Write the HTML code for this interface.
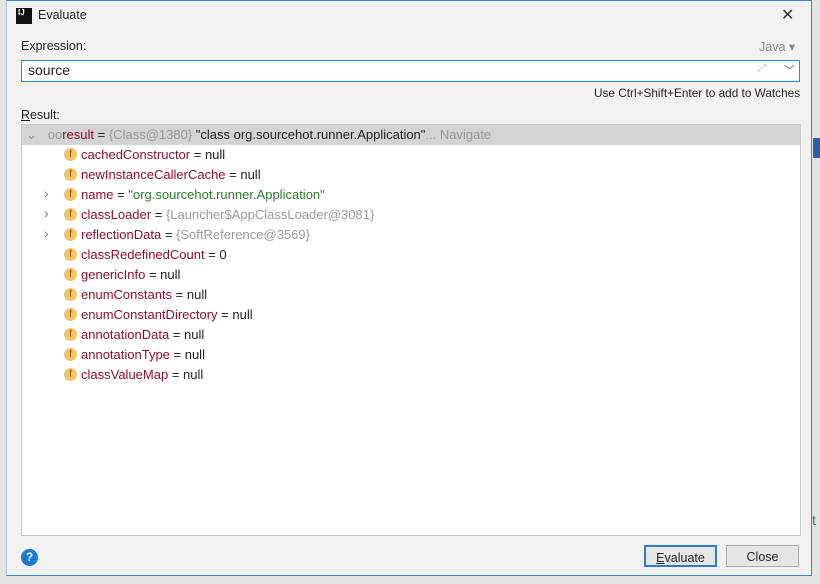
<!DOCTYPE html>
<html><head><style>
body{margin:0;width:820px;height:584px;background:#e4e4e4;position:relative;overflow:hidden;font-family:"Liberation Sans","Noto Sans CJK SC",sans-serif;font-size:12.5px;color:#222}
.dlg{position:absolute;left:6px;top:0;width:806px;height:576px;background:#f2f2f2;border:1px solid #3a86c8;border-left-color:#b0c8e0;box-sizing:border-box}
.abs{position:absolute;white-space:nowrap}
.tree{position:absolute;left:14px;top:123px;width:780px;height:412px;background:#fff;border:1px solid #c8c8c8;box-sizing:border-box;font-size:13px}
.row{position:absolute;left:0;height:20px;line-height:20px;white-space:nowrap}
.f{display:inline-block;width:13px;height:13px;border-radius:50%;background:#f4c46a;color:#8a5a00;font-size:10px;line-height:13px;text-align:center;vertical-align:middle;position:relative;top:-1px;margin-right:4px}
.n{color:#8a1030}.g{color:#999}.s{color:#2a7a2a}
.arr{position:absolute;color:#777;font-size:14px}
.btn{position:absolute;top:544px;height:22px;line-height:22px;text-align:center;background:#e6e6e6;border:1px solid #adadad;box-sizing:border-box;font-size:12.5px}
</style></head><body>
<div class="abs" style="left:813px;top:138px;width:7px;height:20px;background:#2d5fa8"></div>
<div class="abs" style="left:812px;top:512px;color:#3a7a5a;font-size:14px">t</div>
<div class="dlg">
 <div class="abs" style="left:9px;top:7px;width:16px;height:16px;background:#111;color:#fff;font-size:8px;font-weight:bold;line-height:10px;text-align:left;padding-left:2px;box-sizing:border-box">IJ</div>
 <div class="abs" style="left:31px;top:7px;font-size:12.5px">Evaluate</div>
 <div class="abs" style="left:774px;top:4px;font-size:16px;color:#333">✕</div>
 <div class="abs" style="left:14px;top:38px">Expression:</div>
 <div class="abs" style="left:752px;top:38px;color:#888">Java ▾</div>
 <div class="abs" style="left:14px;top:59px;width:779px;height:22px;background:#fff;border:1px solid #3a86c8;box-sizing:border-box"></div>
 <div class="abs" style="left:21px;top:61px;font-size:14px">source</div>
 <div class="abs" style="left:751px;top:62px;font-size:10px;color:#bbb">⤢</div>
 <div class="abs" style="left:777px;top:61px;font-size:11px;color:#666">﹀</div>
 <div class="abs" style="left:587px;top:85px;font-size:11.8px">Use Ctrl+Shift+Enter to add to Watches</div>
 <div class="abs" style="left:14px;top:107px"><u>R</u>esult:</div>
 <div class="tree">
  <div class="row" style="top:0;width:778px;background:#d4d4d4;padding-left:4px;box-sizing:border-box"><span style="color:#888">⌄</span>&nbsp;&nbsp;&nbsp;<span class="g">oo</span><span class="n">result</span> = <span class="g">{Class@1380}</span> "class org.sourcehot.runner.Application"<span class="g">... Navigate</span></div>
  <div class="row" style="top:20px;left:42px"><span class="f">f</span><span class="n">cachedConstructor</span> = null</div>
  <div class="row" style="top:40px;left:42px"><span class="f">f</span><span class="n">newInstanceCallerCache</span> = null</div>
  <div class="arr" style="left:22px;top:60px">›</div>
  <div class="row" style="top:60px;left:42px"><span class="f">f</span><span class="n">name</span> = <span class="s">"org.sourcehot.runner.Application"</span></div>
  <div class="arr" style="left:22px;top:80px">›</div>
  <div class="row" style="top:80px;left:42px"><span class="f">f</span><span class="n">classLoader</span> = <span class="g">{Launcher$AppClassLoader@3081}</span></div>
  <div class="arr" style="left:22px;top:100px">›</div>
  <div class="row" style="top:100px;left:42px"><span class="f">f</span><span class="n">reflectionData</span> = <span class="g">{SoftReference@3569}</span></div>
  <div class="row" style="top:120px;left:42px"><span class="f">f</span><span class="n">classRedefinedCount</span> = 0</div>
  <div class="row" style="top:140px;left:42px"><span class="f">f</span><span class="n">genericInfo</span> = null</div>
  <div class="row" style="top:160px;left:42px"><span class="f">f</span><span class="n">enumConstants</span> = null</div>
  <div class="row" style="top:180px;left:42px"><span class="f">f</span><span class="n">enumConstantDirectory</span> = null</div>
  <div class="row" style="top:200px;left:42px"><span class="f">f</span><span class="n">annotationData</span> = null</div>
  <div class="row" style="top:220px;left:42px"><span class="f">f</span><span class="n">annotationType</span> = null</div>
  <div class="row" style="top:240px;left:42px"><span class="f">f</span><span class="n">classValueMap</span> = null</div>
 </div>
 <div class="abs" style="left:14px;top:548px;width:17px;height:17px;border-radius:50%;background:#1b7bd0;color:#fff;font-size:12px;font-weight:bold;text-align:center;line-height:17px">?</div>
 <div class="btn" style="left:637px;width:73px;border:2px solid #2e7cc4"><u>E</u>valuate</div>
 <div class="btn" style="left:719px;width:73px">Close</div>
</div>
</body></html>
